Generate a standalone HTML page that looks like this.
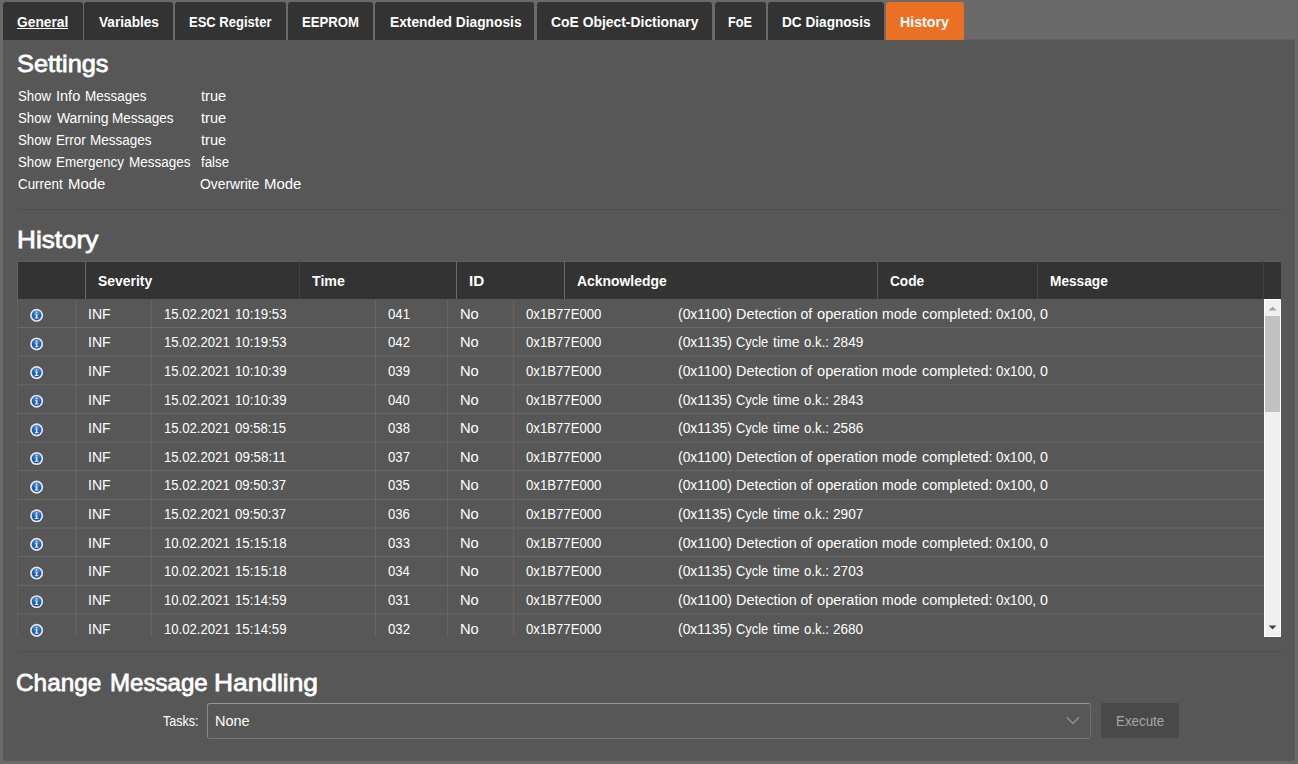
<!DOCTYPE html>
<html lang="en"><head><meta charset="utf-8"><title>History</title>
<style>
html,body{margin:0;padding:0}
    body{width:1298px;height:764px;overflow:hidden;background:#6a6a6a;font-family:'Liberation Sans', sans-serif;color:#fff;position:relative}
    span{position:absolute;white-space:pre;line-height:40px;font-size:14px;transform-origin:0 0}
    .tab{position:absolute;top:2px;height:38px;background:#333333;border-radius:3px 3px 0 0}
    .tab.active{background:#ec7024}
    .tabs span{font-size:14.5px;font-weight:700}
    .panel{position:absolute;left:3px;top:40px;width:1292px;height:720.5px;background:#575757;border-radius:0 0 3px 3px}
    .h{font-size:24.5px;-webkit-text-stroke:0.8px #fff}
    .hr{position:absolute;left:17px;width:1264px;height:1px;background:#4f4f4f}
    .b{font-weight:700}
    i{display:inline-block;font-style:normal;white-space:pre;transform-origin:0 0}
    .grid{position:absolute;left:17px;top:261px;width:1264px;height:376px;overflow:hidden}
    .vl{position:absolute;width:1px;background:#626262}
    .hl{position:absolute;height:1px;left:0;width:1247px;background:#656565}
    .ico{position:absolute;width:16px;height:16px}
    
</style></head><body>
<div class="tabs">
<div class="tab" style="left:3.0px;width:79.7px"></div>
<div class="tab" style="left:84.1px;width:88.7px"></div>
<div class="tab" style="left:175.2px;width:110.7px"></div>
<div class="tab" style="left:288.3px;width:84.6px"></div>
<div class="tab" style="left:375.3px;width:158.8px"></div>
<div class="tab" style="left:537.0px;width:174.8px"></div>
<div class="tab" style="left:715.0px;width:50.7px"></div>
<div class="tab" style="left:768.2px;width:115.6px"></div>
<div class="tab active" style="left:886.2px;width:77.6px"></div>
<span style="left:17.42px;top:2px;transform:scaleX(0.9515);">General</span>
<span style="left:99.31px;top:2px;transform:scaleX(0.9414);">Variables</span>
<span style="left:189.43px;top:2px;transform:scaleX(0.8975);">ESC Register</span>
<span style="left:302.14px;top:2px;transform:scaleX(0.9085);">EEPROM</span>
<span style="left:389.80px;top:2px;transform:scaleX(0.9494);">Extended Diagnosis</span>
<span style="left:550.80px;top:2px;transform:scaleX(0.9580);">CoE Object-Dictionary</span>
<span style="left:728.47px;top:2px;transform:scaleX(0.8736);">FoE</span>
<span style="left:781.77px;top:2px;transform:scaleX(0.9392);">DC Diagnosis</span>
<span style="left:900.34px;top:2px;transform:scaleX(0.9793);">History</span>
<div style="position:absolute;left:17px;top:28px;width:51.4px;height:1.3px;background:#fff"></div>
</div>
<div style="position:absolute;left:964px;top:39px;width:331px;height:1px;background:#626262"></div>
<div class="panel"></div>
<span class="h" style="left:16.91px;top:44px;transform:scaleX(1.0331);">Settings</span>
<span style="left:17.83px;top:76px"><i style="width:37.88px;transform:scaleX(0.9450)">Show </i><i style="width:29.03px;transform:scaleX(1.0371)">Info </i><i style="transform:scaleX(0.9617)">Messages</i></span>
<span style="left:200.64px;top:76px"><i style="transform:scaleX(1.0443)">true</i></span>
<span style="left:17.83px;top:98px"><i style="width:39.07px;transform:scaleX(0.9450)">Show </i><i style="width:55.51px;">Warning </i><i style="transform:scaleX(0.9657)">Messages</i></span>
<span style="left:200.64px;top:98px"><i style="transform:scaleX(1.0443)">true</i></span>
<span style="left:17.83px;top:120px"><i style="width:38.43px;transform:scaleX(0.9450)">Show </i><i style="width:34.24px;transform:scaleX(0.9503)">Error </i><i style="transform:scaleX(0.9617)">Messages</i></span>
<span style="left:200.64px;top:120px"><i style="transform:scaleX(1.0443)">true</i></span>
<span style="left:17.83px;top:142px"><i style="width:38.40px;transform:scaleX(0.9450)">Show </i><i style="width:72.43px;transform:scaleX(0.9593)">Emergency </i><i style="transform:scaleX(0.9617)">Messages</i></span>
<span style="left:200.69px;top:142px"><i style="transform:scaleX(0.9469)">false</i></span>
<span style="left:18.38px;top:164px"><i style="width:50.00px;transform:scaleX(0.9553)">Current </i><i style="transform:scaleX(1.0662)">Mode</i></span>
<span style="left:199.54px;top:164px"><i style="width:64.83px;transform:scaleX(0.9901)">Overwrite </i><i style="transform:scaleX(1.0662)">Mode</i></span>
<div class="hr" style="top:209px"></div>
<span class="h" style="left:16.70px;top:220px;transform:scaleX(1.0671);">History</span>
<div class="grid">
<div style="position:absolute;left:0;top:0;width:1264px;height:37.5px;background:#333333"></div>
<div class="vl" style="left:0;top:0;height:376px"></div>
<div style="position:absolute;left:0;top:0;width:1264px;height:1px;background:#5e5e5e"></div>
<div class="vl" style="left:67.7px;top:0;height:37.5px;background:#686868"></div>
<div class="vl" style="left:281.9px;top:0;height:37.5px;background:#444"></div>
<div class="vl" style="left:438.9px;top:0;height:37.5px;background:#6a6a6a"></div>
<div class="vl" style="left:547.1px;top:0;height:37.5px;background:#686868"></div>
<div class="vl" style="left:860.1px;top:0;height:37.5px;background:#585858"></div>
<div class="vl" style="left:1019.8px;top:0;height:37.5px;background:#464646"></div>
<div class="vl" style="left:1245.9px;top:0;height:37.5px;background:#3e3e3e"></div>
<svg style="position:absolute;left:0;top:0" width="1247" height="376" viewBox="0 0 1247 376"><rect x="58.70" y="38" width="1" height="340" fill="#666"/><rect x="133.80" y="38" width="1" height="340" fill="#666"/><rect x="358.00" y="38" width="1" height="340" fill="#666"/><rect x="430.20" y="38" width="1" height="340" fill="#666"/><rect x="496.20" y="38" width="1" height="340" fill="#666"/><rect x="0" y="66.00" width="1247" height="1" fill="#696969"/><rect x="0" y="94.64" width="1247" height="1" fill="#696969"/><rect x="0" y="123.28" width="1247" height="1" fill="#696969"/><rect x="0" y="151.92" width="1247" height="1" fill="#696969"/><rect x="0" y="180.56" width="1247" height="1" fill="#696969"/><rect x="0" y="209.20" width="1247" height="1" fill="#696969"/><rect x="0" y="237.84" width="1247" height="1" fill="#696969"/><rect x="0" y="266.48" width="1247" height="1" fill="#696969"/><rect x="0" y="295.12" width="1247" height="1" fill="#696969"/><rect x="0" y="323.76" width="1247" height="1" fill="#696969"/><rect x="0" y="352.40" width="1247" height="1" fill="#696969"/><rect x="0" y="381.04" width="1247" height="1" fill="#696969"/></svg>
<div style="position:absolute;left:1247px;top:37.5px;width:17px;height:338.5px;background:#f0f0f0;border:1px solid #fff;box-sizing:border-box"></div>
<div style="position:absolute;left:1248.3px;top:55.4px;width:14.6px;height:96px;background:#c1c1c1"></div>
<svg style="position:absolute;left:1247px;top:37.5px" width="17" height="339" viewBox="0 0 17 339"><path d="M4.6 11.4 L8.6 7.4 L12.6 11.4Z" fill="#a3a3a3"/><path d="M4.8 326.5 L12.4 326.5 L8.6 330.6Z" fill="#404040"/></svg>
</div>
<span class="b" style="left:97.53px;top:261px;transform:scaleX(0.9950);">Severity</span>
<span class="b" style="left:311.70px;top:261px;transform:scaleX(1.0122);">Time</span>
<span class="b" style="left:468.51px;top:261px;transform:scaleX(1.0867);">ID</span>
<span class="b" style="left:576.86px;top:261px;transform:scaleX(0.9943);">Acknowledge</span>
<span class="b" style="left:889.74px;top:261px;transform:scaleX(0.9749);">Code</span>
<span class="b" style="left:1049.69px;top:261px;transform:scaleX(0.9770);">Message</span>
<svg class="ico" style="left:28px;top:307px" viewBox="0 0 16 16"><g transform="translate(8.60 8.30)"><circle r="7" cy=".3" fill="#3c3c3c" opacity=".45"/><circle r="6.55" fill="#e6e6e6"/><circle r="4.85" fill="url(#bg)"/><rect x="-.9" y="-3.7" width="1.7" height="1.7" rx=".8" fill="#dfe8f5" opacity=".9"/><path d="M-1.3 -1.3H.8V2.3H1.9V3.3H-1.9V2.3H-.8V-.4H-1.3Z" fill="#e3e9f3"/></g></svg>
<span style="left:88.38px;top:294px;transform:scaleX(0.9967);">INF</span>
<span style="left:164.44px;top:294px"><i style="width:70.15px;transform:scaleX(0.9381)">15.02.2021 </i><i style="transform:scaleX(0.9467)">10:19:53</i></span>
<span style="left:387.58px;top:294px;transform:scaleX(0.9394);">041</span>
<span style="left:459.68px;top:294px;transform:scaleX(1.0500);">No</span>
<span style="left:525.59px;top:294px;transform:scaleX(0.9404);">0x1B77E000</span>
<span style="left:677.95px;top:294px"><i style="width:57.83px;transform:scaleX(0.9928)">(0x1100) </i><i style="width:64.65px;transform:scaleX(1.0279)">Detection </i><i style="width:16.15px;">of </i><i style="width:65.54px;transform:scaleX(1.0441)">operation </i><i style="width:39.47px;">mode </i><i style="width:74.31px;transform:scaleX(1.0300)">completed: </i><i style="width:44.08px;transform:scaleX(0.9523)">0x100, </i><i style="transform:scaleX(1.0192)">0</i></span>
<svg class="ico" style="left:28px;top:335px" viewBox="0 0 16 16"><g transform="translate(8.60 8.94)"><circle r="7" cy=".3" fill="#3c3c3c" opacity=".45"/><circle r="6.55" fill="#e6e6e6"/><circle r="4.85" fill="url(#bg)"/><rect x="-.9" y="-3.7" width="1.7" height="1.7" rx=".8" fill="#dfe8f5" opacity=".9"/><path d="M-1.3 -1.3H.8V2.3H1.9V3.3H-1.9V2.3H-.8V-.4H-1.3Z" fill="#e3e9f3"/></g></svg>
<span style="left:88.38px;top:322px;transform:scaleX(0.9967);">INF</span>
<span style="left:164.44px;top:322px"><i style="width:70.15px;transform:scaleX(0.9381)">15.02.2021 </i><i style="transform:scaleX(0.9467)">10:19:53</i></span>
<span style="left:387.58px;top:322px;transform:scaleX(0.9406);">042</span>
<span style="left:459.68px;top:322px;transform:scaleX(1.0500);">No</span>
<span style="left:525.59px;top:322px;transform:scaleX(0.9404);">0x1B77E000</span>
<span style="left:677.95px;top:322px"><i style="width:57.65px;transform:scaleX(0.9928)">(0x1135) </i><i style="width:37.43px;transform:scaleX(0.9184)">Cycle </i><i style="width:31.44px;transform:scaleX(1.0081)">time </i><i style="width:28.08px;transform:scaleX(0.9454)">o.k.: </i><i style="transform:scaleX(0.9725)">2849</i></span>
<svg class="ico" style="left:28px;top:364px" viewBox="0 0 16 16"><g transform="translate(8.60 8.58)"><circle r="7" cy=".3" fill="#3c3c3c" opacity=".45"/><circle r="6.55" fill="#e6e6e6"/><circle r="4.85" fill="url(#bg)"/><rect x="-.9" y="-3.7" width="1.7" height="1.7" rx=".8" fill="#dfe8f5" opacity=".9"/><path d="M-1.3 -1.3H.8V2.3H1.9V3.3H-1.9V2.3H-.8V-.4H-1.3Z" fill="#e3e9f3"/></g></svg>
<span style="left:88.38px;top:351px;transform:scaleX(0.9967);">INF</span>
<span style="left:164.44px;top:351px"><i style="width:70.15px;transform:scaleX(0.9381)">15.02.2021 </i><i style="transform:scaleX(0.9455)">10:10:39</i></span>
<span style="left:387.58px;top:351px;transform:scaleX(0.9397);">039</span>
<span style="left:459.68px;top:351px;transform:scaleX(1.0500);">No</span>
<span style="left:525.59px;top:351px;transform:scaleX(0.9404);">0x1B77E000</span>
<span style="left:677.95px;top:351px"><i style="width:57.83px;transform:scaleX(0.9928)">(0x1100) </i><i style="width:64.65px;transform:scaleX(1.0279)">Detection </i><i style="width:16.15px;">of </i><i style="width:65.54px;transform:scaleX(1.0441)">operation </i><i style="width:39.47px;">mode </i><i style="width:74.31px;transform:scaleX(1.0300)">completed: </i><i style="width:44.08px;transform:scaleX(0.9523)">0x100, </i><i style="transform:scaleX(1.0192)">0</i></span>
<svg class="ico" style="left:28px;top:393px" viewBox="0 0 16 16"><g transform="translate(8.60 8.22)"><circle r="7" cy=".3" fill="#3c3c3c" opacity=".45"/><circle r="6.55" fill="#e6e6e6"/><circle r="4.85" fill="url(#bg)"/><rect x="-.9" y="-3.7" width="1.7" height="1.7" rx=".8" fill="#dfe8f5" opacity=".9"/><path d="M-1.3 -1.3H.8V2.3H1.9V3.3H-1.9V2.3H-.8V-.4H-1.3Z" fill="#e3e9f3"/></g></svg>
<span style="left:88.38px;top:380px;transform:scaleX(0.9967);">INF</span>
<span style="left:164.44px;top:380px"><i style="width:70.15px;transform:scaleX(0.9381)">15.02.2021 </i><i style="transform:scaleX(0.9455)">10:10:39</i></span>
<span style="left:387.59px;top:380px;transform:scaleX(0.9334);">040</span>
<span style="left:459.68px;top:380px;transform:scaleX(1.0500);">No</span>
<span style="left:525.59px;top:380px;transform:scaleX(0.9404);">0x1B77E000</span>
<span style="left:677.95px;top:380px"><i style="width:57.65px;transform:scaleX(0.9928)">(0x1135) </i><i style="width:37.43px;transform:scaleX(0.9184)">Cycle </i><i style="width:31.44px;transform:scaleX(1.0081)">time </i><i style="width:28.08px;transform:scaleX(0.9454)">o.k.: </i><i style="transform:scaleX(0.9732)">2843</i></span>
<svg class="ico" style="left:28px;top:421px" viewBox="0 0 16 16"><g transform="translate(8.60 8.86)"><circle r="7" cy=".3" fill="#3c3c3c" opacity=".45"/><circle r="6.55" fill="#e6e6e6"/><circle r="4.85" fill="url(#bg)"/><rect x="-.9" y="-3.7" width="1.7" height="1.7" rx=".8" fill="#dfe8f5" opacity=".9"/><path d="M-1.3 -1.3H.8V2.3H1.9V3.3H-1.9V2.3H-.8V-.4H-1.3Z" fill="#e3e9f3"/></g></svg>
<span style="left:88.38px;top:408px;transform:scaleX(0.9967);">INF</span>
<span style="left:164.44px;top:408px"><i style="width:70.95px;transform:scaleX(0.9381)">15.02.2021 </i><i style="transform:scaleX(0.9360)">09:58:15</i></span>
<span style="left:387.58px;top:408px;transform:scaleX(0.9395);">038</span>
<span style="left:459.68px;top:408px;transform:scaleX(1.0500);">No</span>
<span style="left:525.59px;top:408px;transform:scaleX(0.9404);">0x1B77E000</span>
<span style="left:677.95px;top:408px"><i style="width:57.65px;transform:scaleX(0.9928)">(0x1135) </i><i style="width:37.43px;transform:scaleX(0.9184)">Cycle </i><i style="width:31.44px;transform:scaleX(1.0081)">time </i><i style="width:28.08px;transform:scaleX(0.9454)">o.k.: </i><i style="transform:scaleX(0.9728)">2586</i></span>
<svg class="ico" style="left:28px;top:450px" viewBox="0 0 16 16"><g transform="translate(8.60 8.50)"><circle r="7" cy=".3" fill="#3c3c3c" opacity=".45"/><circle r="6.55" fill="#e6e6e6"/><circle r="4.85" fill="url(#bg)"/><rect x="-.9" y="-3.7" width="1.7" height="1.7" rx=".8" fill="#dfe8f5" opacity=".9"/><path d="M-1.3 -1.3H.8V2.3H1.9V3.3H-1.9V2.3H-.8V-.4H-1.3Z" fill="#e3e9f3"/></g></svg>
<span style="left:88.38px;top:437px;transform:scaleX(0.9967);">INF</span>
<span style="left:164.44px;top:437px"><i style="width:70.95px;transform:scaleX(0.9381)">15.02.2021 </i><i style="transform:scaleX(0.9558)">09:58:11</i></span>
<span style="left:387.58px;top:437px;transform:scaleX(0.9406);">037</span>
<span style="left:459.68px;top:437px;transform:scaleX(1.0500);">No</span>
<span style="left:525.59px;top:437px;transform:scaleX(0.9404);">0x1B77E000</span>
<span style="left:677.95px;top:437px"><i style="width:57.83px;transform:scaleX(0.9928)">(0x1100) </i><i style="width:64.65px;transform:scaleX(1.0279)">Detection </i><i style="width:16.15px;">of </i><i style="width:65.54px;transform:scaleX(1.0441)">operation </i><i style="width:39.47px;">mode </i><i style="width:74.31px;transform:scaleX(1.0300)">completed: </i><i style="width:44.08px;transform:scaleX(0.9523)">0x100, </i><i style="transform:scaleX(1.0192)">0</i></span>
<svg class="ico" style="left:28px;top:479px" viewBox="0 0 16 16"><g transform="translate(8.60 8.14)"><circle r="7" cy=".3" fill="#3c3c3c" opacity=".45"/><circle r="6.55" fill="#e6e6e6"/><circle r="4.85" fill="url(#bg)"/><rect x="-.9" y="-3.7" width="1.7" height="1.7" rx=".8" fill="#dfe8f5" opacity=".9"/><path d="M-1.3 -1.3H.8V2.3H1.9V3.3H-1.9V2.3H-.8V-.4H-1.3Z" fill="#e3e9f3"/></g></svg>
<span style="left:88.38px;top:465px;transform:scaleX(0.9967);">INF</span>
<span style="left:164.44px;top:465px"><i style="width:70.95px;transform:scaleX(0.9381)">15.02.2021 </i><i style="transform:scaleX(0.9381)">09:50:37</i></span>
<span style="left:387.58px;top:465px;transform:scaleX(0.9359);">035</span>
<span style="left:459.68px;top:465px;transform:scaleX(1.0500);">No</span>
<span style="left:525.59px;top:465px;transform:scaleX(0.9404);">0x1B77E000</span>
<span style="left:677.95px;top:465px"><i style="width:57.83px;transform:scaleX(0.9928)">(0x1100) </i><i style="width:64.65px;transform:scaleX(1.0279)">Detection </i><i style="width:16.15px;">of </i><i style="width:65.54px;transform:scaleX(1.0441)">operation </i><i style="width:39.47px;">mode </i><i style="width:74.31px;transform:scaleX(1.0300)">completed: </i><i style="width:44.08px;transform:scaleX(0.9523)">0x100, </i><i style="transform:scaleX(1.0192)">0</i></span>
<svg class="ico" style="left:28px;top:507px" viewBox="0 0 16 16"><g transform="translate(8.60 8.78)"><circle r="7" cy=".3" fill="#3c3c3c" opacity=".45"/><circle r="6.55" fill="#e6e6e6"/><circle r="4.85" fill="url(#bg)"/><rect x="-.9" y="-3.7" width="1.7" height="1.7" rx=".8" fill="#dfe8f5" opacity=".9"/><path d="M-1.3 -1.3H.8V2.3H1.9V3.3H-1.9V2.3H-.8V-.4H-1.3Z" fill="#e3e9f3"/></g></svg>
<span style="left:88.38px;top:494px;transform:scaleX(0.9967);">INF</span>
<span style="left:164.44px;top:494px"><i style="width:70.95px;transform:scaleX(0.9381)">15.02.2021 </i><i style="transform:scaleX(0.9381)">09:50:37</i></span>
<span style="left:387.58px;top:494px;transform:scaleX(0.9376);">036</span>
<span style="left:459.68px;top:494px;transform:scaleX(1.0500);">No</span>
<span style="left:525.59px;top:494px;transform:scaleX(0.9404);">0x1B77E000</span>
<span style="left:677.95px;top:494px"><i style="width:57.65px;transform:scaleX(0.9928)">(0x1135) </i><i style="width:37.43px;transform:scaleX(0.9184)">Cycle </i><i style="width:31.44px;transform:scaleX(1.0081)">time </i><i style="width:28.08px;transform:scaleX(0.9454)">o.k.: </i><i style="transform:scaleX(0.9733)">2907</i></span>
<svg class="ico" style="left:28px;top:536px" viewBox="0 0 16 16"><g transform="translate(8.60 8.42)"><circle r="7" cy=".3" fill="#3c3c3c" opacity=".45"/><circle r="6.55" fill="#e6e6e6"/><circle r="4.85" fill="url(#bg)"/><rect x="-.9" y="-3.7" width="1.7" height="1.7" rx=".8" fill="#dfe8f5" opacity=".9"/><path d="M-1.3 -1.3H.8V2.3H1.9V3.3H-1.9V2.3H-.8V-.4H-1.3Z" fill="#e3e9f3"/></g></svg>
<span style="left:88.38px;top:523px;transform:scaleX(0.9967);">INF</span>
<span style="left:164.44px;top:523px"><i style="width:70.15px;transform:scaleX(0.9381)">10.02.2021 </i><i style="transform:scaleX(0.9467)">15:15:18</i></span>
<span style="left:387.58px;top:523px;transform:scaleX(0.9399);">033</span>
<span style="left:459.68px;top:523px;transform:scaleX(1.0500);">No</span>
<span style="left:525.59px;top:523px;transform:scaleX(0.9404);">0x1B77E000</span>
<span style="left:677.95px;top:523px"><i style="width:57.83px;transform:scaleX(0.9928)">(0x1100) </i><i style="width:64.65px;transform:scaleX(1.0279)">Detection </i><i style="width:16.15px;">of </i><i style="width:65.54px;transform:scaleX(1.0441)">operation </i><i style="width:39.47px;">mode </i><i style="width:74.31px;transform:scaleX(1.0300)">completed: </i><i style="width:44.08px;transform:scaleX(0.9523)">0x100, </i><i style="transform:scaleX(1.0192)">0</i></span>
<svg class="ico" style="left:28px;top:565px" viewBox="0 0 16 16"><g transform="translate(8.60 8.06)"><circle r="7" cy=".3" fill="#3c3c3c" opacity=".45"/><circle r="6.55" fill="#e6e6e6"/><circle r="4.85" fill="url(#bg)"/><rect x="-.9" y="-3.7" width="1.7" height="1.7" rx=".8" fill="#dfe8f5" opacity=".9"/><path d="M-1.3 -1.3H.8V2.3H1.9V3.3H-1.9V2.3H-.8V-.4H-1.3Z" fill="#e3e9f3"/></g></svg>
<span style="left:88.38px;top:551px;transform:scaleX(0.9967);">INF</span>
<span style="left:164.44px;top:551px"><i style="width:70.15px;transform:scaleX(0.9381)">10.02.2021 </i><i style="transform:scaleX(0.9467)">15:15:18</i></span>
<span style="left:387.59px;top:551px;transform:scaleX(0.9284);">034</span>
<span style="left:459.68px;top:551px;transform:scaleX(1.0500);">No</span>
<span style="left:525.59px;top:551px;transform:scaleX(0.9404);">0x1B77E000</span>
<span style="left:677.95px;top:551px"><i style="width:57.65px;transform:scaleX(0.9928)">(0x1135) </i><i style="width:37.43px;transform:scaleX(0.9184)">Cycle </i><i style="width:31.44px;transform:scaleX(1.0081)">time </i><i style="width:28.08px;transform:scaleX(0.9454)">o.k.: </i><i style="transform:scaleX(0.9732)">2703</i></span>
<svg class="ico" style="left:28px;top:593px" viewBox="0 0 16 16"><g transform="translate(8.60 8.70)"><circle r="7" cy=".3" fill="#3c3c3c" opacity=".45"/><circle r="6.55" fill="#e6e6e6"/><circle r="4.85" fill="url(#bg)"/><rect x="-.9" y="-3.7" width="1.7" height="1.7" rx=".8" fill="#dfe8f5" opacity=".9"/><path d="M-1.3 -1.3H.8V2.3H1.9V3.3H-1.9V2.3H-.8V-.4H-1.3Z" fill="#e3e9f3"/></g></svg>
<span style="left:88.38px;top:580px;transform:scaleX(0.9967);">INF</span>
<span style="left:164.44px;top:580px"><i style="width:70.15px;transform:scaleX(0.9381)">10.02.2021 </i><i style="transform:scaleX(0.9455)">15:14:59</i></span>
<span style="left:387.58px;top:580px;transform:scaleX(0.9394);">031</span>
<span style="left:459.68px;top:580px;transform:scaleX(1.0500);">No</span>
<span style="left:525.59px;top:580px;transform:scaleX(0.9404);">0x1B77E000</span>
<span style="left:677.95px;top:580px"><i style="width:57.83px;transform:scaleX(0.9928)">(0x1100) </i><i style="width:64.65px;transform:scaleX(1.0279)">Detection </i><i style="width:16.15px;">of </i><i style="width:65.54px;transform:scaleX(1.0441)">operation </i><i style="width:39.47px;">mode </i><i style="width:74.31px;transform:scaleX(1.0300)">completed: </i><i style="width:44.08px;transform:scaleX(0.9523)">0x100, </i><i style="transform:scaleX(1.0192)">0</i></span>
<svg class="ico" style="left:28px;top:622px" viewBox="0 0 16 16"><g transform="translate(8.60 8.34)"><circle r="7" cy=".3" fill="#3c3c3c" opacity=".45"/><circle r="6.55" fill="#e6e6e6"/><circle r="4.85" fill="url(#bg)"/><rect x="-.9" y="-3.7" width="1.7" height="1.7" rx=".8" fill="#dfe8f5" opacity=".9"/><path d="M-1.3 -1.3H.8V2.3H1.9V3.3H-1.9V2.3H-.8V-.4H-1.3Z" fill="#e3e9f3"/></g></svg>
<span style="left:88.38px;top:609px;transform:scaleX(0.9967);">INF</span>
<span style="left:164.44px;top:609px"><i style="width:70.15px;transform:scaleX(0.9381)">10.02.2021 </i><i style="transform:scaleX(0.9455)">15:14:59</i></span>
<span style="left:387.58px;top:609px;transform:scaleX(0.9406);">032</span>
<span style="left:459.68px;top:609px;transform:scaleX(1.0500);">No</span>
<span style="left:525.59px;top:609px;transform:scaleX(0.9404);">0x1B77E000</span>
<span style="left:677.95px;top:609px"><i style="width:57.65px;transform:scaleX(0.9928)">(0x1135) </i><i style="width:37.43px;transform:scaleX(0.9184)">Cycle </i><i style="width:31.44px;transform:scaleX(1.0081)">time </i><i style="width:28.10px;transform:scaleX(0.9454)">o.k.: </i><i style="transform:scaleX(0.9663)">2680</i></span>
<svg width="0" height="0" style="position:absolute"><defs><radialGradient id="bg" cx=".5" cy=".2" r=".8"><stop offset="0" stop-color="#5b9be0"/><stop offset=".6" stop-color="#1a5fbf"/><stop offset="1" stop-color="#0f50b0"/></radialGradient></defs></svg>
<div class="hr" style="top:651px"></div>
<span class="h" style="left:16.47px;top:663px"><i style="width:93.42px;transform:scaleX(0.9943)">Change </i><i style="width:104.60px;transform:scaleX(0.9825)">Message </i><i style="transform:scaleX(1.0755)">Handling</i></span>
<span style="left:162.56px;top:701px;transform:scaleX(0.8959);">Tasks:</span>
<div style="position:absolute;left:207px;top:703px;width:882px;height:34px;border:1px solid;border-color:#969696 #707070 #767676 #8a8a8a;border-radius:3px;box-sizing:content-box"></div>
<span style="left:214.72px;top:701px;transform:scaleX(1.0356);">None</span>
<svg style="position:absolute;left:1064px;top:713px" width="18" height="14" viewBox="0 0 18 14"><path d="M2.8 4.3 L8.9 10.5 L15 4.3" fill="none" stroke="#8e9092" stroke-width="1.4"/></svg>
<div style="position:absolute;left:1101px;top:703px;width:78px;height:35px;background:#494949;border-radius:2px"></div>
<span style="left:1115.66px;top:701px;transform:scaleX(0.9536);color:#a6a6a6;">Execute</span>
</body></html>
